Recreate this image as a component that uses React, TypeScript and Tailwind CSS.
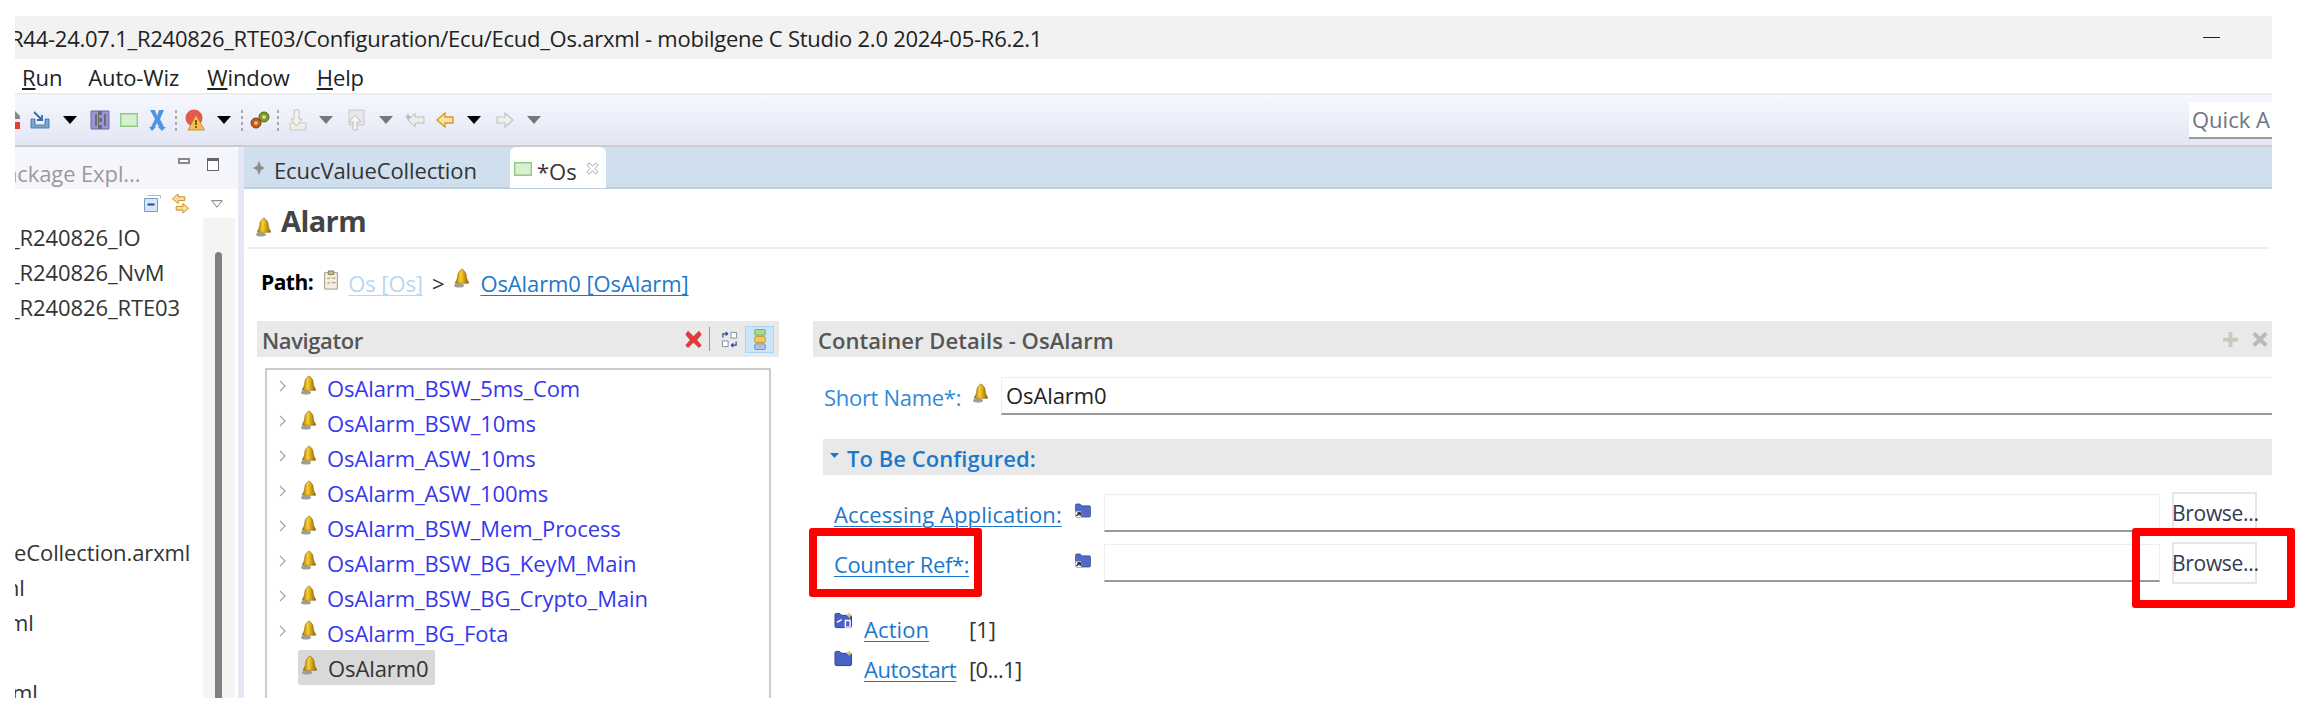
import React, { useId } from "react";

const FONT = "font-['Open_Sans','Noto_Sans',sans-serif]";

function Bell({ className = "" }: { className?: string }) {
  const id = useId();
  return (
    <svg viewBox="0 0 18 20" className={className}>
      <defs>
        <linearGradient id={id} x1="0" x2="1" y1="0" y2="0">
          <stop offset="0" stopColor="#a87408" />
          <stop offset="0.4" stopColor="#f8d030" />
          <stop offset="1" stopColor="#946402" />
        </linearGradient>
      </defs>
      <ellipse cx="6" cy="17.5" rx="5" ry="2" fill="#a09f94" />
      <path d="M9 1.200c1 0 1.600.7 1.800 1.600 1.600.8 2.200 2.400 2.400 4.600.2 2.700.8 4.600 2.300 6.600v1.300H2.500v-1.300c1.500-2 2.100-3.900 2.300-6.600.2-2.200.8-3.800 2.400-4.600.2-.9.800-1.600 1.800-1.600z" fill={`url(#${id})`} stroke="#8e6304" strokeWidth="0.6" />
    </svg>
  );
}

function Down({ gray = false, className = "" }: { gray?: boolean; className?: string }) {
  return (
    <svg viewBox="0 0 14 8" className={`w-[14px] h-[8px] shrink-0 ${className}`}>
      <path d="M0 0h14L7 8z" fill={gray ? "#777" : "#000"} />
    </svg>
  );
}

function Sep({ className = "" }: { className?: string }) {
  return (
    <div className={`flex flex-col gap-[3px] shrink-0 ${className}`}>
      {[0, 1, 2, 3].map((i) => (
        <span key={i} className="block w-[2px] h-[3px] bg-[#aaa]" />
      ))}
    </div>
  );
}

function Folder({ className = "" }: { className?: string }) {
  return (
    <svg viewBox="0 0 18 16" className={`w-[18px] h-[15px] shrink-0 ${className}`}>
      <path d="M1 2.500C1 1.500 1.600 1 2.500 1h3.500l2 2h7.500c1 0 1.500.5 1.500 1.500v9c0 1-.5 1.500-1.500 1.500h-13C1.500 15 1 14.500 1 13.500z" fill="#5468c8" stroke="#2f3f8f" strokeWidth="0.7" />
      <path d="M1 9h6v6H2.500C1.500 15 1 14.500 1 13.500z" fill="#fff" />
      <path d="M2 14l3-3M3 10.500h3v3" stroke="#111" strokeWidth="1.400" fill="none" />
    </svg>
  );
}

function Input({ className = "", children }: { className?: string; children?: React.ReactNode }) {
  return (
    <div className={`h-[38px] bg-white border border-[#eeeeee] border-b-2 border-b-[#9a9a9a] flex items-center ${className}`}>
      {children}
    </div>
  );
}

function Browse() {
  return (
    <div className="ml-[12px] w-[85px] h-[42px] -my-[2px] border-2 border-[#e6e6e6] bg-white flex items-center shrink-0 text-[21px] text-[#333a55] whitespace-nowrap tracking-[-0.3px]">
      <span className="-ml-[2px] mt-[2px]">Browse...</span>
    </div>
  );
}

const TREE = [
  "OsAlarm_BSW_5ms_Com",
  "OsAlarm_BSW_10ms",
  "OsAlarm_ASW_10ms",
  "OsAlarm_ASW_100ms",
  "OsAlarm_BSW_Mem_Process",
  "OsAlarm_BSW_BG_KeyM_Main",
  "OsAlarm_BSW_BG_Crypto_Main",
  "OsAlarm_BG_Fota",
];

function Toolbar() {
  return (
    <div className="h-[54px] flex items-center overflow-hidden border-t-2 border-t-[#eeeeee] border-b-2 border-b-[#cccccc] bg-linear-to-b from-[#f6f8fe] to-[#e3e6f4]">
      <svg viewBox="0 0 5 20" className="w-[5px] h-[20px] shrink-0">
        <path d="M0 12h5v7H0z" fill="#e2402a" />
        <path d="M0 1l5 5v3H0z" fill="#888" />
      </svg>
      <svg viewBox="0 0 20 18" className="ml-[10px] w-[20px] h-[18px] shrink-0">
        <path d="M1 8h4v6h10V8h4v9H1z" fill="#7da6d2" stroke="#38689f" strokeWidth="0.8" />
        <path d="M4 1l8 8M12 4v5H7" stroke="#2a6fb4" strokeWidth="1.800" fill="none" />
      </svg>
      <Down className="ml-[13px]" />
      <svg viewBox="0 0 20 20" className="ml-[13px] w-[20px] h-[20px] shrink-0">
        <path d="M1 1h18v18H1z" fill="#9a97d6" stroke="#6a68a8" />
        <path d="M8 1h4v4H9v3h3v4H9v3h3v4H8zM5 4h2v12H5zM14 4h2v12h-2z" fill="#6d6b72" />
      </svg>
      <svg viewBox="0 0 18 14" className="ml-[10px] w-[18px] h-[14px] shrink-0">
        <path d="M.7.700h16.600v12.600H.7z" fill="#d9efd0" stroke="#8ccc84" strokeWidth="1.400" />
      </svg>
      <svg viewBox="0 0 18 22" className="ml-[10px] w-[18px] h-[22px] shrink-0">
        <path d="M2 1h5l2 6 2-6h5l-4 9 4 8h2l-4 4-4-4h1l-2-4-2 4h1l-4 4-3-4h2l4-8z" fill="#4d94e4" />
      </svg>
      <Sep className="ml-[9px]" />
      <svg viewBox="0 0 20 22" className="ml-[8px] w-[20px] h-[22px] shrink-0">
        <circle cx="9" cy="9" r="8.500" fill="#e25a4e" />
        <path d="M11 6l8.500 15H3z" fill="#f5c052" stroke="#bd8420" strokeWidth="0.8" />
        <path d="M10.200 11h1.600v5h-1.600zM10.200 17h1.600v2h-1.600z" fill="#6a4708" />
      </svg>
      <Down className="ml-[12px]" />
      <Sep className="ml-[10px]" />
      <svg viewBox="0 0 20 18" className="ml-[7px] w-[20px] h-[18px] shrink-0">
        <circle cx="14" cy="6" r="5" fill="#7f9d26" stroke="#4e6910" />
        <circle cx="14" cy="6" r="1.800" fill="#dfe6b0" />
        <circle cx="6" cy="12" r="5" fill="#c85a1c" stroke="#87380c" />
        <circle cx="6" cy="12" r="1.800" fill="#e9c8ab" />
      </svg>
      <Sep className="ml-[7px]" />
      <svg viewBox="0 0 20 22" className="ml-[8px] w-[20px] h-[22px] shrink-0">
        <path d="M3 14h16v7H3z" fill="#eceee8" stroke="#c8cac6" />
        <path d="M7 1h5v9h3l-5.500 7L4 10h3z" fill="#f2f2ee" stroke="#bfc1bd" />
      </svg>
      <Down gray className="ml-[12px]" />
      <svg viewBox="0 0 18 22" className="ml-[14px] w-[18px] h-[22px] shrink-0">
        <path d="M2 1h15v15H2z" fill="#e6e8e8" stroke="#c8caca" />
        <path d="M6 21v-8H2l6-7 6 7h-4v8z" fill="#f4f4f2" stroke="#bfc1bd" />
      </svg>
      <Down gray className="ml-[14px]" />
      <svg viewBox="0 0 20 16" className="ml-[12px] w-[20px] h-[16px] shrink-0">
        <path d="M19 5v6h-9v4L3 8l7-7v4z" fill="#ecedeb" stroke="#bcbebb" />
        <path d="M3 1l1 3 3 1-3 1-1 3-1-3-2-1 2-1z" fill="#b5b7b4" />
      </svg>
      <svg viewBox="0 0 18 16" className="ml-[11px] w-[18px] h-[16px] shrink-0">
        <path d="M17 5v6H9v4L1 8l8-7v4z" fill="#fbe3a0" stroke="#d69a25" strokeWidth="1.400" />
      </svg>
      <Down className="ml-[13px]" />
      <svg viewBox="0 0 18 16" className="ml-[15px] w-[18px] h-[16px] shrink-0">
        <path d="M1 5v6h8v4l8-7-8-7v4z" fill="#f0f1ef" stroke="#c2c4c1" strokeWidth="1.200" />
      </svg>
      <Down gray className="ml-[13px]" />
      <div className="ml-auto w-[83px] h-[37px] bg-white border-b-2 border-b-[#999] pl-[3px] overflow-hidden flex items-center whitespace-nowrap text-[22px] text-[#6e7480]">
        Quick A
      </div>
    </div>
  );
}

function LeftPanel() {
  const rows: [string, string][] = [
    ["_R240826_IO", "-ml-[5px]"],
    ["_R240826_NvM", "-ml-[5px]"],
    ["_R240826_RTE03", "-ml-[5px]"],
    ["", ""],
    ["", ""],
    ["", ""],
    ["", ""],
    ["", ""],
    ["", ""],
    ["eCollection.arxml", "-ml-[1px]"],
    ["ml", "-ml-[16px]"],
    ["ml", "-ml-[7px]"],
    ["", ""],
    ["ml", "-ml-[3px]"],
  ];
  return (
    <div className="w-[223px] shrink-0 bg-white flex flex-col overflow-hidden">
      <div className="h-[42px] bg-[#f5f6fc] rounded-tr-[6px] flex items-start shrink-0 overflow-hidden">
        <span className="-ml-[23px] mt-[11px] whitespace-nowrap text-[22px] leading-[30px] text-[#9a9a9a] tracking-[-0.1px]">Package Expl...</span>
        <span className="ml-auto mt-[11px] w-[12px] h-[6px] border-2 border-[#888] bg-white" />
        <span className="ml-[17px] mr-[19px] mt-[11px] w-[12px] h-[13px] border border-[#666] border-t-[3px] bg-white" />
      </div>
      <div className="h-[29px] flex items-center shrink-0 pl-[129px]">
        <svg viewBox="0 0 17 17" className="w-[17px] h-[17px]">
          <path d="M.5 3.500h13v13H.5z" fill="#d8e5f5" stroke="#7a9bc8" />
          <path d="M3.500.5h13v3" fill="none" stroke="#a4bcdc" />
          <path d="M3.500 9.500h7" stroke="#1e4f9c" strokeWidth="2" />
        </svg>
        <svg viewBox="0 0 21 22" className="ml-[9px] w-[21px] h-[21px]">
          <path d="M8 1L2 6l6 5V8h7V4H8z" fill="#f6dd9c" stroke="#c88e22" />
          <path d="M13 11l6 5-6 5v-3H6v-4h7z" fill="#f6dd9c" stroke="#c88e22" />
        </svg>
        <svg viewBox="0 0 12 8" className="ml-[20px] w-[12px] h-[8px]">
          <path d="M.7.7h10.600L6 7.200z" fill="none" stroke="#777" />
        </svg>
      </div>
      <div className="flex-1 flex min-h-0 overflow-hidden">
        <div className="w-[188px] pt-[2px] text-[22px] text-[#333] overflow-hidden">
          {rows.map(([t, c], i) => (
            <div key={i} className="h-[35px] leading-[35px] whitespace-nowrap tracking-[-0.1px]">
              <div className={c}>{t}</div>
            </div>
          ))}
        </div>
        <div className="w-[32px] bg-[#f4f4f4] pl-[12px] pt-[34px]">
          <div className="w-[7px] h-[500px] bg-[#808080] rounded-t-[4px]" />
        </div>
      </div>
    </div>
  );
}

function Navigator() {
  return (
    <div className="w-[522px] shrink-0 flex flex-col">
      <div className="h-[36px] bg-[#e9e9e9] flex items-center pl-[5px] shrink-0">
        <span className="font-semibold text-[22px] mt-[2px] text-[#555] tracking-[-0.4px]">Navigator</span>
        <svg viewBox="0 0 18 22" className="ml-auto w-[17px] h-[20px]">
          <path d="M3 2l6 6 6-6 3 4-5 6 5 6-3 3-6-6-6 6-3-3 5-6-5-6z" fill="#e23a3a" />
        </svg>
        <span className="ml-[7px] w-px h-[24px] bg-[#999]" />
        <svg viewBox="0 0 18 18" className="ml-[11px] w-[17px] h-[17px]">
          <path d="M10.500 1.500h6v6h-6zM1.500 10.500h6v6h-6z" fill="#fff" stroke="#7f8c9a" />
          <path d="M2 7V3h4M5 1l2 2-2 2M16 11v4h-4M13 13l-2 2 2 2" stroke="#24408f" strokeWidth="1.200" fill="none" />
        </svg>
        <div className="ml-[7px] mr-[5px] w-[29px] h-[27px] bg-[#cce4f7] border border-[#a8d4f5] flex items-center justify-center">
          <svg viewBox="0 0 12 22" className="w-[12px] h-[21px]">
            <rect x="0.500" y="0.500" width="11" height="6" rx="1" fill="#a9d88c" stroke="#78ab5a" />
            <rect x="0.500" y="8" width="11" height="6" rx="1" fill="#f2cc5e" stroke="#c49a2a" />
            <rect x="0.500" y="15.500" width="11" height="6" rx="1" fill="#aebfe0" stroke="#7b8eb8" />
          </svg>
        </div>
      </div>
      <div className="mt-[11px] mx-[8px] flex-1 border-x-2 border-t-2 border-[#cccccc] pl-[12px] text-[22px] tracking-[-0.1px] overflow-hidden">
        {TREE.map((t) => (
          <div key={t} className="h-[35px] flex items-center text-[#3737ee] whitespace-nowrap">
            <svg viewBox="0 0 8 14" className="w-[7px] h-[12px] shrink-0 -mt-[4px]">
              <path d="M1 1l6 6-6 6" fill="none" stroke="#999" strokeWidth="1.300" />
            </svg>
            <Bell className="ml-[14px] w-[18px] h-[20px] shrink-0 -mt-[6px]" />
            <span className="ml-[9px] mt-[2px]">{t}</span>
          </div>
        ))}
        <div className="ml-[19px] w-[137px] h-[35px] bg-[#d9d9d9] rounded-[2px] flex items-center pl-[3px]">
          <Bell className="w-[18px] h-[20px] shrink-0 -mt-[6px]" />
          <span className="ml-[9px] mt-[2px] text-[#333]">OsAlarm0</span>
        </div>
      </div>
    </div>
  );
}

function Details() {
  const link = "text-[22px] text-[#1c78cc] underline underline-offset-[3px] decoration-1 whitespace-nowrap";
  return (
    <div className="flex-1 min-w-0 ml-[34px] flex flex-col overflow-visible">
      <div className="h-[36px] bg-[#e9e9e9] flex items-center pl-[5px] shrink-0">
        <span className="font-semibold text-[22px] mt-[2px] text-[#555] tracking-[0.05px]">Container Details - OsAlarm</span>
        <svg viewBox="0 0 16 16" className="ml-auto w-[15px] h-[15px]">
          <path d="M6 0h4v6h6v4h-6v6H6v-6H0V6h6z" fill="#c6cabc" />
        </svg>
        <svg viewBox="0 0 16 16" className="ml-[14px] mr-[4px] w-[16px] h-[15px]">
          <path d="M3 0l5 5 5-5 3 3-5 5 5 5-3 3-5-5-5 5-3-3 5-5-5-5z" fill="#b9b9b9" />
        </svg>
      </div>
      <div className="mt-[20px] pl-[11px] flex items-center shrink-0">
        <span className="w-[148px] text-[22px] mt-[2px] text-[#2f8ad8] whitespace-nowrap tracking-[-0.3px]">Short Name*:</span>
        <Bell className="w-[18px] h-[20px] shrink-0 -mt-[6px]" />
        <Input className="ml-[11px] flex-1 border-r-0 pl-[4px] text-[22px] text-[#222] tracking-[-0.1px]">OsAlarm0</Input>
      </div>
      <div className="mt-[24px] ml-[10px] h-[36px] bg-[#e9e9e9] flex items-center pl-[7px] shrink-0">
        <svg viewBox="0 0 9 5" className="w-[9px] h-[5px] -mt-[4px]">
          <path d="M0 0h9L4.500 5z" fill="#1c78cc" />
        </svg>
        <span className="ml-[8px] mt-[2px] font-semibold text-[22px] text-[#1c78cc] tracking-[0.05px]">To Be Configured:</span>
      </div>
      <div className="mt-[19px] pl-[21px] flex items-center shrink-0">
        <span className={`w-[240px] mt-[3px] tracking-[0.1px] ${link}`}>Accessing Application:</span>
        <Folder className="-mt-[6px]" />
        <Input className="ml-[12px] w-[1056px]" />
        <Browse />
      </div>
      <div className="mt-[12px] pl-[21px] flex items-center shrink-0">
        <span className={`w-[240px] mt-[3px] tracking-[-0.4px] ${link}`}>Counter Ref*:</span>
        <Folder className="-mt-[6px]" />
        <Input className="ml-[12px] w-[1056px]" />
        <Browse />
      </div>
      <div className="mt-[30px] pl-[21px] h-[38px] flex items-start shrink-0">
        <svg viewBox="0 0 20 18" className="w-[19px] h-[17px] shrink-0">
          <path d="M1 3c0-1 .6-1.500 1.500-1.500H6l2 2h9c1 0 1.500.5 1.500 1.500v10c0 1-.5 1.500-1.500 1.500H2.500C1.600 16.500 1 16 1 15z" fill="#4a62c6" stroke="#2c3c8c" />
          <path d="M3 11l5-3M12 9h5v7h-5z" stroke="#fff" strokeWidth="1.500" fill="none" />
          <path d="M16 0l1 2.500 2.500 1-2.500 1-1 2.500-1-2.500-2.500-1 2.500-1z" fill="#e7c65a" />
        </svg>
        <div className="ml-[11px] h-[34px] flex items-center text-[22px]">
          <span className={`w-[105px] tracking-[0.1px] ${link}`}>Action</span>
          <span className="text-[#333]">[1]</span>
        </div>
      </div>
      <div className="pl-[21px] h-[40px] flex items-start shrink-0">
        <svg viewBox="0 0 20 18" className="w-[19px] h-[17px] shrink-0">
          <path d="M1 3c0-1 .6-1.500 1.500-1.500H6l2 2h9c1 0 1.500.5 1.500 1.500v10c0 1-.5 1.500-1.500 1.500H2.500C1.600 16.500 1 16 1 15z" fill="#4a62c6" stroke="#2c3c8c" />
          <path d="M16 0l1 2.500 2.500 1-2.500 1-1 2.500-1-2.500-2.500-1 2.500-1z" fill="#e7c65a" />
        </svg>
        <div className="ml-[11px] h-[38px] flex items-center text-[22px]">
          <span className={`w-[105px] tracking-[-0.4px] ${link}`}>Autostart</span>
          <span className="text-[#333] tracking-[-0.6px]">[0...1]</span>
        </div>
      </div>
    </div>
  );
}

function Editor() {
  return (
    <div className="flex-1 min-w-0 flex flex-col">
      <div className="h-[42px] bg-[#cfdfee] border-b-2 border-b-[#bccde4] flex shrink-0">
        <div className="w-[266px] flex items-center pl-[9px] text-[22px] text-[#333] tracking-[-0.1px]">
          <svg viewBox="0 0 12 14" className="w-[12px] h-[14px] mt-[2px]">
            <path d="M6 0l2 5 4 2-4 2-2 5-2-5-4-2 4-2z" fill="#8a8a8a" />
          </svg>
          <span className="ml-[9px] mt-[7px]">EcucValueCollection</span>
        </div>
        <div className="w-[96px] h-[41px] bg-white rounded-t-[6px] flex items-center pl-[4px] text-[22px] text-[#333]">
          <svg viewBox="0 0 18 14" className="w-[18px] h-[14px] mt-[2px] shrink-0">
            <path d="M.7.700h16.600v12.600H.7z" fill="#d9efd0" stroke="#8ccc84" strokeWidth="1.400" />
          </svg>
          <span className="ml-[5px] mt-[7px]">*Os</span>
          <svg viewBox="0 0 13 13" className="ml-[9px] w-[13px] h-[13px] mt-[2px] shrink-0">
            <path d="M1 3l2-2 3.500 3L10 1l2 2-3 3.500 3 3.500-2 2-3.500-3L3 12l-2-2 3-3.500z" fill="#fff" stroke="#aaa" />
          </svg>
        </div>
      </div>
      <div className="flex-1 bg-white flex flex-col min-h-0">
        <div className="h-[60px] mx-[3px] border-b-2 border-b-[#eeeeee] flex items-start shrink-0 pl-[8px]">
          <Bell className="mt-[28px] w-[18px] h-[20px]" />
          <span className="ml-[8px] mt-[12px] text-[29px] leading-[40px] font-bold text-[#444] tracking-[-0.6px]">Alarm</span>
        </div>
        <div className="h-[72px] pl-[17px] pt-[18px] flex items-start text-[22px] shrink-0 tracking-[-0.1px]">
          <span className="font-bold text-black text-[21px] tracking-[-0.5px]">Path:</span>
          <svg viewBox="0 0 16 22" className="ml-[10px] mt-[3px] w-[16px] h-[20px]">
            <path d="M1 3h14v18H1z" fill="#f5eedd" stroke="#9c9078" />
            <path d="M5 1h6v4H5z" fill="#c6b48c" stroke="#8a7a58" />
            <path d="M4 9l1 1 2-2M4 14l1 1 2-2" stroke="#39a139" fill="none" />
            <path d="M9 9h4M9 14h4" stroke="#888" />
          </svg>
          <span className="ml-[9px] text-[#b9d6f2] underline underline-offset-[3px] decoration-1">Os [Os]</span>
          <span className="ml-[9px] text-[#333]">&gt;</span>
          <Bell className="ml-[9px] mt-[1px] w-[18px] h-[20px]" />
          <span className="ml-[9px] text-[#1c78cc] underline underline-offset-[3px] decoration-1">OsAlarm0 [OsAlarm]</span>
        </div>
        <div className="flex-1 flex pl-[13px] min-h-0">
          <Navigator />
          <Details />
        </div>
      </div>
    </div>
  );
}

export default function App() {
  return (
    <div className={`relative w-[2316px] h-[713px] bg-white overflow-hidden pt-[16px] pl-[15px] pr-[44px] ${FONT}`}>
      <div className="h-[43px] bg-[#f2f2f2] flex items-center overflow-hidden">
        <span className="-ml-[5px] mt-[2px] whitespace-nowrap text-[22px] text-[#222] tracking-[-0.25px]">
          R44-24.07.1_R240826_RTE03/Configuration/Ecu/Ecud_Os.arxml - mobilgene C Studio 2.0 2024-05-R6.2.1
        </span>
        <span className="ml-auto mr-[52px] w-[17px] h-[1px] bg-[#222]" />
      </div>
      <div className="h-[34px] flex items-center pl-[7px] text-[22px] text-[#222] tracking-[-0.1px]">
        <span className="mt-[3px]"><span className="underline">R</span>un</span>
        <span className="ml-[26px] mt-[3px]">Auto-Wiz</span>
        <span className="ml-[28px] mt-[3px]"><span className="underline">W</span>indow</span>
        <span className="ml-[27px] mt-[3px]"><span className="underline">H</span>elp</span>
      </div>
      <Toolbar />
      <div className="h-[551px] flex gap-[6px] bg-[#e5e8f4] overflow-hidden">
        <LeftPanel />
        <Editor />
      </div>
      <div className="absolute left-[809px] top-[528px] w-[173px] h-[69px] border-[8px] border-[#ff0000] rounded-[3px]" />
      <div className="absolute left-[2132px] top-[528px] w-[163px] h-[80px] border-[8px] border-[#ff0000] rounded-[3px]" />
    </div>
  );
}
